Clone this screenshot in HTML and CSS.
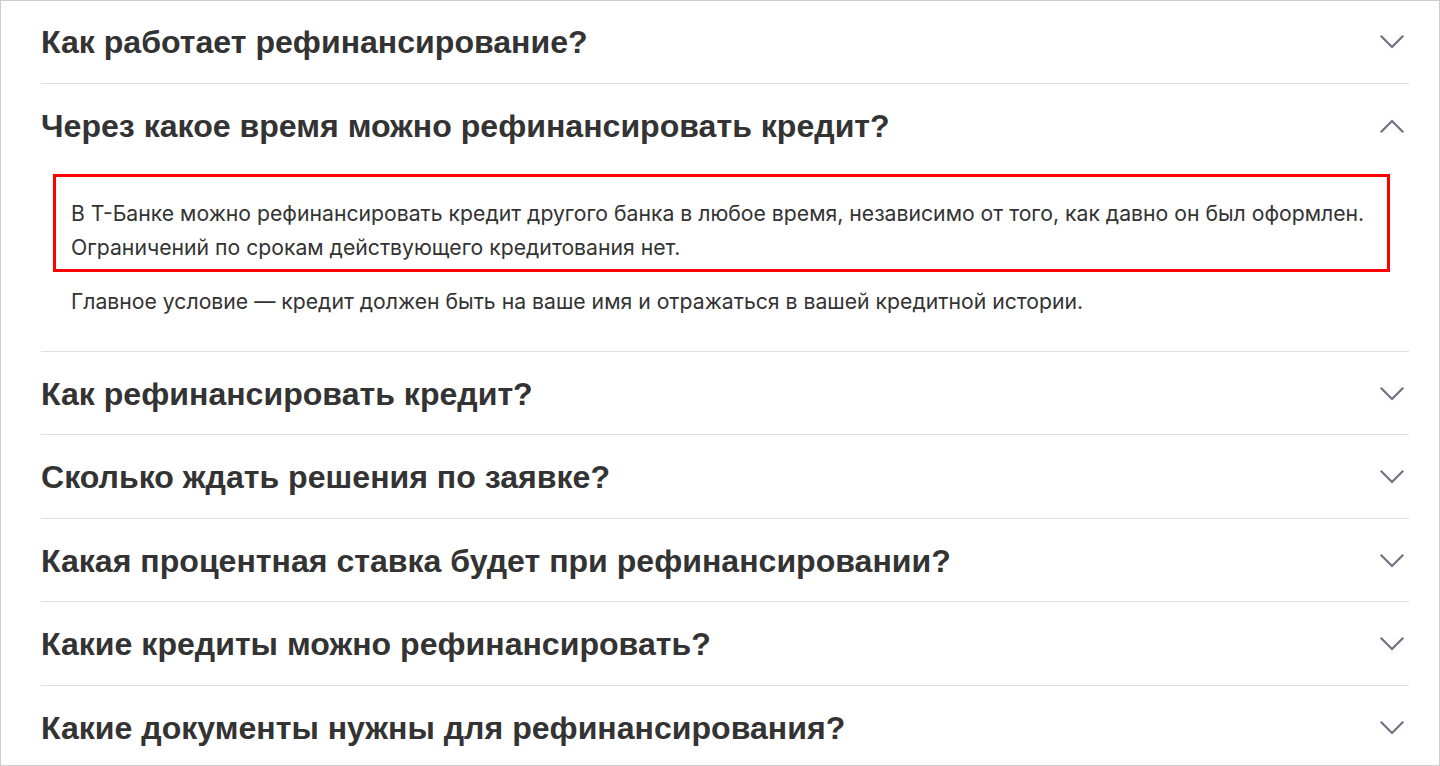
FILE: index.html
```html
<!DOCTYPE html>
<html lang="ru">
<head>
<meta charset="utf-8">
<title>FAQ</title>
<link rel="stylesheet" href="styles.css">
</head>
<body>
<div class="frame">
  <div class="faq">
    <div class="item">
      <div class="q"><h3 class="q-title">Как работает рефинансирование?</h3><svg class="chev" viewBox="0 0 24 14" width="24" height="14"><path d="M1.5 1.5 L12 12 L22.5 1.5"/></svg></div>
    </div>
    <div class="item open">
      <div class="q"><h3 class="q-title">Через какое время можно рефинансировать кредит?</h3><svg class="chev" viewBox="0 0 24 14" width="24" height="14"><path d="M1.5 12.5 L12 2 L22.5 12.5"/></svg></div>
      <div class="answer">
        <p class="para marked">В Т-Банке можно рефинансировать кредит другого банка в любое время, независимо от того, как давно он был оформлен. Ограничений по срокам действующего кредитования нет.</p>
        <p class="para">Главное условие — кредит должен быть на ваше имя и отражаться в вашей кредитной истории.</p>
      </div>
    </div>
    <div class="item">
      <div class="q"><h3 class="q-title">Как рефинансировать кредит?</h3><svg class="chev" viewBox="0 0 24 14" width="24" height="14"><path d="M1.5 1.5 L12 12 L22.5 1.5"/></svg></div>
    </div>
    <div class="item">
      <div class="q"><h3 class="q-title">Сколько ждать решения по заявке?</h3><svg class="chev" viewBox="0 0 24 14" width="24" height="14"><path d="M1.5 1.5 L12 12 L22.5 1.5"/></svg></div>
    </div>
    <div class="item">
      <div class="q"><h3 class="q-title">Какая процентная ставка будет при рефинансировании?</h3><svg class="chev" viewBox="0 0 24 14" width="24" height="14"><path d="M1.5 1.5 L12 12 L22.5 1.5"/></svg></div>
    </div>
    <div class="item">
      <div class="q"><h3 class="q-title">Какие кредиты можно рефинансировать?</h3><svg class="chev" viewBox="0 0 24 14" width="24" height="14"><path d="M1.5 1.5 L12 12 L22.5 1.5"/></svg></div>
    </div>
    <div class="item">
      <div class="q"><h3 class="q-title">Какие документы нужны для рефинансирования?</h3><svg class="chev" viewBox="0 0 24 14" width="24" height="14"><path d="M1.5 1.5 L12 12 L22.5 1.5"/></svg></div>
    </div>
  </div>
</div>
</body>
</html>
```

FILE: styles.css
```css
* { box-sizing: border-box; }
html, body { margin: 0; padding: 0; background: #fff; }
body { font-family: "Liberation Sans", Arial, sans-serif; color: #333333; }
.frame {
  width: 1440px;
  height: 766px;
  border: 1px solid #cccccc;
  overflow: hidden;
  background: #fff;
}
.faq {
  padding: 0 30px 0 40px;
  margin-top: -1px;
}
.item {
  padding: 22px 0 20.5px;
  border-bottom: 1px solid #e0e0e0;
}
.item.open { padding-bottom: 32.5px; }
.q {
  display: flex;
  align-items: center;
  justify-content: space-between;
  height: 40px;
}
.q-title {
  margin: 0;
  font-size: 32.1px;
  line-height: 40px;
  font-weight: 700;
  color: #333333;
}
.chev {
  margin-right: 5px;
  flex: none;
}
.chev path {
  fill: none;
  stroke: #6b7480;
  stroke-width: 2.2;
  stroke-linecap: square;
}
.answer {
  padding-top: 28.5px;
}
.para {
  margin: 0;
  padding-left: 30px;
  font-family: Inter, "Liberation Sans", sans-serif;
  font-size: 21.2px;
  line-height: 34px;
  color: #333333;
}
.marked {
  margin: 0 19px 12px 12px;
  padding: 19px 15px 5px 15px;
  border: 3px solid #ff0000;
}
```
